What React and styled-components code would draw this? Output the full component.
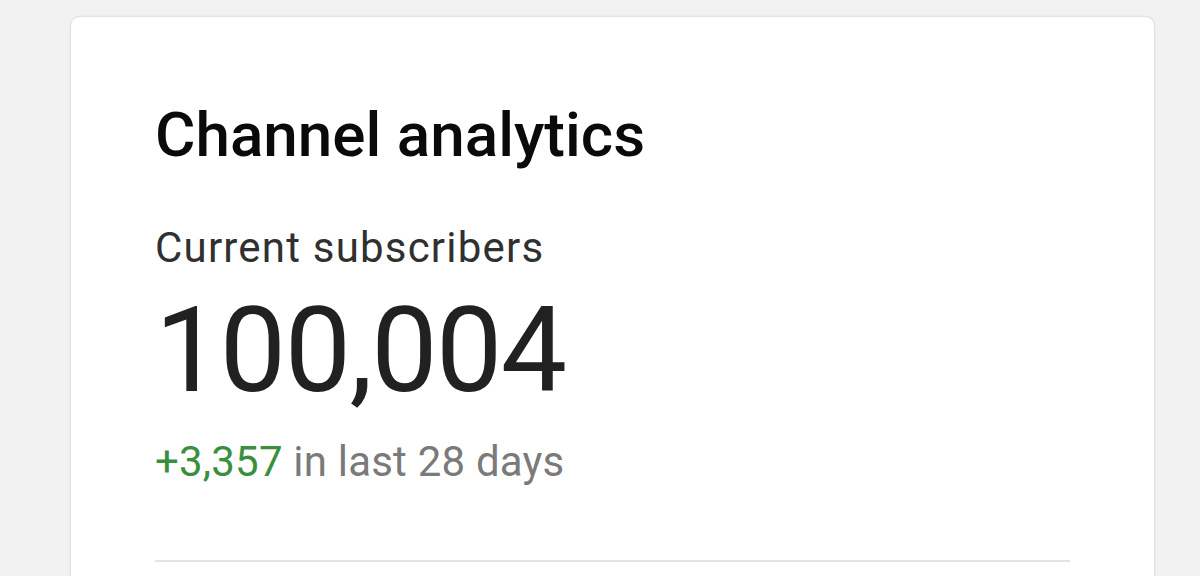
import React from 'react'
import styled, { createGlobalStyle } from 'styled-components'

const GlobalStyle = createGlobalStyle`
  html, body {
    margin: 0;
    padding: 0;
    background: #f2f2f2;
    font-family: Roboto, "Noto Sans", Arial, sans-serif;
  }
`

const Page = styled.div`
  height: 576px;
  overflow: hidden;
  padding: 16px 45px 0 70px;
  box-sizing: border-box;
`

const Card = styled.section`
  background: #fff;
  border: 1px solid #e2e2e2;
  border-radius: 10px;
  box-shadow: 0 0 2px rgba(0, 0, 0, 0.08);
  padding: 87px 84px 40px 84px;
  height: 700px;
  box-sizing: border-box;
`

const Title = styled.h2`
  margin: 0;
  font-size: 62px;
  line-height: 1;
  font-weight: 500;
  color: #0a0a0a;
`

const Label = styled.div`
  margin-top: 61px;
  font-size: 42px;
  line-height: 1;
  letter-spacing: 1.2px;
  color: #303030;
`

const BigNumber = styled.div`
  margin-top: 23px;
  font-size: 118px;
  line-height: 1;
  color: #212121;
  letter-spacing: -1.5px;
`

const Change = styled.div`
  margin-top: 31px;
  font-size: 42px;
  line-height: 1;
  letter-spacing: 0.2px;
  color: #7a7a7a;
`

const Up = styled.span`
  color: #3a8f3e;
`

const Divider = styled.hr`
  margin: 77px 0 0;
  border: none;
  height: 2px;
  background: #e4e4e4;
`

export default function App() {
  return (
    <Page>
      <GlobalStyle />
      <Card>
        <Title>Channel analytics</Title>
        <Label>Current subscribers</Label>
        <BigNumber>100,004</BigNumber>
        <Change>
          <Up>+3,357</Up> in last 28 days
        </Change>
        <Divider />
      </Card>
    </Page>
  )
}
